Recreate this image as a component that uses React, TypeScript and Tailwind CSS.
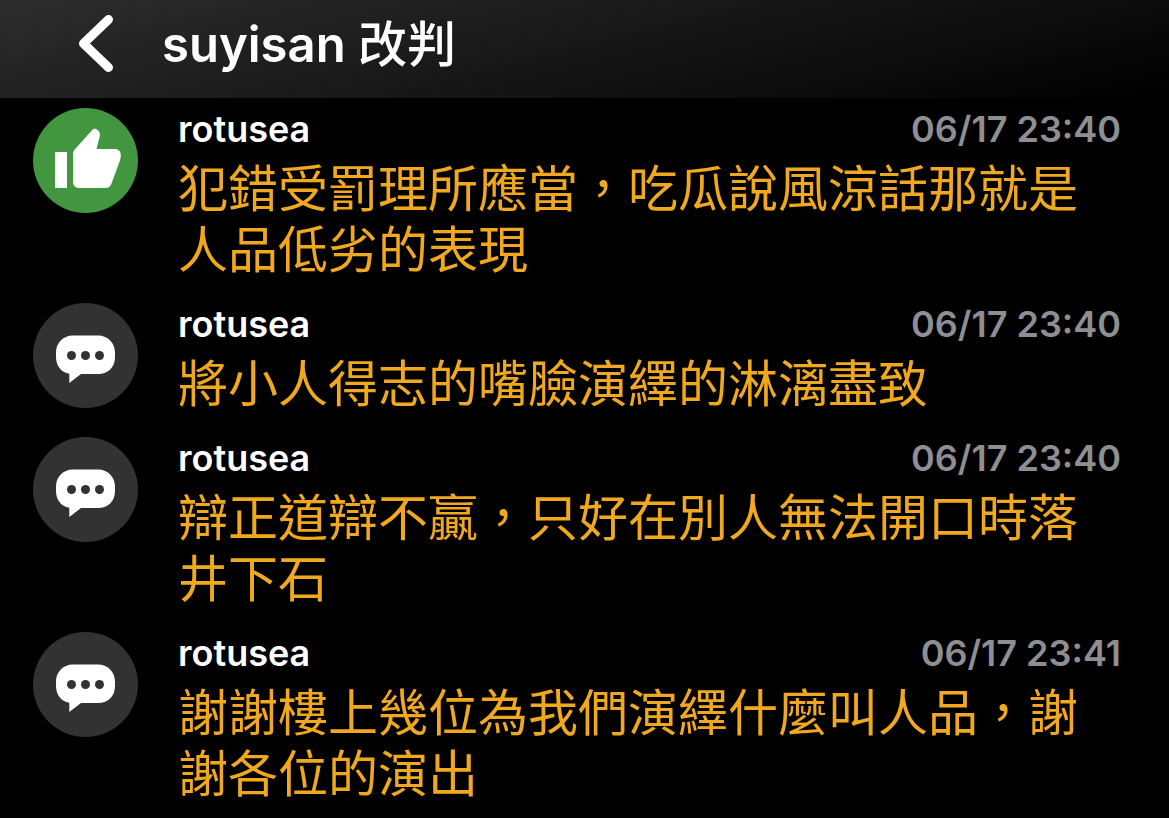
type CommentKind = 'like' | 'reply'

interface Comment {
  id: number
  kind: CommentKind
  author: string
  time: string
  text: string
}

const comments: Comment[] = [
  {
    id: 1,
    kind: 'like',
    author: 'rotusea',
    time: '06/17 23:40',
    text: '犯錯受罰理所應當，吃瓜說風涼話那就是人品低劣的表現',
  },
  {
    id: 2,
    kind: 'reply',
    author: 'rotusea',
    time: '06/17 23:40',
    text: '將小人得志的嘴臉演繹的淋漓盡致',
  },
  {
    id: 3,
    kind: 'reply',
    author: 'rotusea',
    time: '06/17 23:40',
    text: '辯正道辯不贏，只好在別人無法開口時落井下石',
  },
  {
    id: 4,
    kind: 'reply',
    author: 'rotusea',
    time: '06/17 23:41',
    text: '謝謝樓上幾位為我們演繹什麼叫人品，謝謝各位的演出',
  },
]

function LikeBadge() {
  return (
    <svg viewBox="0 0 105 105" className="size-[105px] shrink-0" aria-hidden="true">
      <circle cx="52.5" cy="52.5" r="52.5" fill="#41963f" />
      <path d="M22 44h12v36H22z" fill="#fff" />
      <path
        d="M40 46c0-2 .8-3.500 2.200-5L59 22.200c1.600-1.800 4-1.800 5.600-.3 1.800 1.700 2.700 3.800 2.200 6L63.500 41H82c3.500 0 5.800 2.500 5.800 6 0 2-.3 4-1 6l-8.300 22.500C77.400 78.500 75.500 80 72.500 80H46c-3.500 0-6-2.500-6-6z"
        fill="#fff"
      />
    </svg>
  )
}

function ReplyBadge() {
  return (
    <svg viewBox="0 0 105 105" className="size-[105px] shrink-0" aria-hidden="true">
      <circle cx="52.5" cy="52.5" r="52.5" fill="#323232" />
      <path
        d="M40 32.500h25c10.500 0 17 8 17 17v4.500c0 10-6.500 17-17 17H48L36.300 80v-9.300C28 69.500 23 62.500 23 54v-4.500c0-9 6.500-17 17-17z"
        fill="#fff"
      />
      <circle cx="38.500" cy="52.500" r="4.500" fill="#323232" />
      <circle cx="52.500" cy="52.500" r="4.500" fill="#323232" />
      <circle cx="66.500" cy="52.500" r="4.500" fill="#323232" />
    </svg>
  )
}

function CommentRow({ comment }: { comment: Comment }) {
  return (
    <li className="flex items-start gap-10 pb-[22px]">
      {comment.kind === 'like' ? <LikeBadge /> : <ReplyBadge />}
      <div className="min-w-0 flex-1">
        <div className="flex items-center justify-between text-[36px] leading-[43px]">
          <span className="font-semibold text-white">{comment.author}</span>
          <time className="font-semibold text-[#8e8e93]">{comment.time}</time>
        </div>
        <p className="mt-2 text-[50px] leading-[61px] text-[#f0a81e]">{comment.text}</p>
      </div>
    </li>
  )
}

export default function App() {
  return (
    <div
      lang="zh-Hant"
      className="min-h-screen bg-black font-['Inter','Noto_Sans_CJK_TC',sans-serif]"
    >
      <header className="flex h-[98px] items-center gap-[46px] bg-[linear-gradient(166deg,#2d2d2d,#000000)] px-[76px] pb-2">
        <button type="button" aria-label="返回" className="shrink-0">
          <svg viewBox="0 0 40 64" className="h-16 w-10" fill="none" aria-hidden="true">
            <path
              d="M32.500 6.500L7.500 30.500L32.500 54.500"
              stroke="#fff"
              strokeWidth="9"
              strokeLinecap="round"
              strokeLinejoin="round"
            />
          </svg>
        </button>
        <h1 className="truncate text-[49px] font-semibold text-white">
          suyisan <span className="font-medium">改判</span>
        </h1>
      </header>
      <ul className="pt-2.5 pr-12 pl-[33px]">
        {comments.map((comment) => (
          <CommentRow key={comment.id} comment={comment} />
        ))}
      </ul>
    </div>
  )
}
